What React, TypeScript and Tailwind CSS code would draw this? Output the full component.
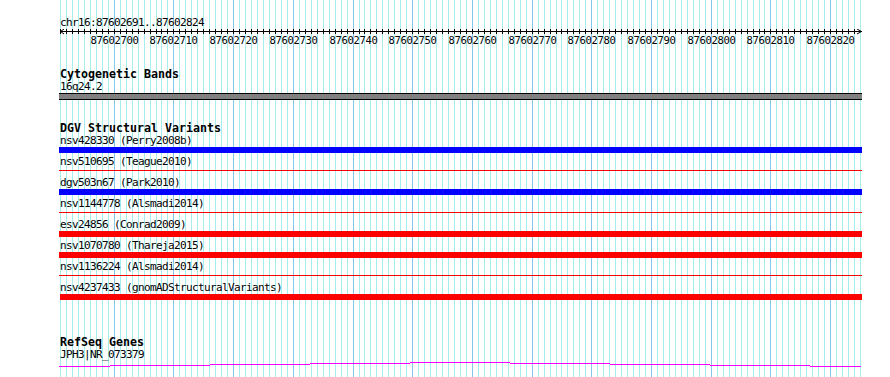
import React from "react";

const PX = 800 / 134;
const START = 87602691;
const col = (k: number) => Math.round(60 + k * PX);

function Grid() {
  const lines: React.ReactNode[] = [];
  for (let k = 0; k <= 134; k++) {
    const pos = START + k;
    const major = pos % 10 === 0;
    lines.push(
      <rect
        key={k}
        x={col(k)}
        y={0}
        width={1}
        height={377}
        fill={major ? "#84c6ec" : "#a6eeee"}
      />
    );
  }
  return (
    <svg
      className="absolute left-0 top-0"
      width={890}
      height={377}
      shapeRendering="crispEdges"
    >
      {lines}
    </svg>
  );
}

function Ruler() {
  const ticks: React.ReactNode[] = [];
  const labels: React.ReactNode[] = [];
  for (let k = 0; k <= 133; k++) {
    const pos = START + k;
    const x = col(k) - 59;
    ticks.push(<rect key={k} x={x} y={0} width={1} height={5} fill="#000" />);
    if (pos % 10 === 0) {
      labels.push(
        <text
          key={"l" + k}
          x={x + 0.5}
          y={15}
          textAnchor="middle"
          fontSize={10.5}
          letterSpacing={-0.3}
          fontFamily="'DejaVu Sans Mono', monospace"
          fill="#000"
        >
          {String(pos)}
        </text>
      );
    }
  }
  return (
    <svg width={803} height={17} className="block">
      <g shapeRendering="crispEdges">
        <rect x={1} y={2} width={802} height={1} fill="#000" />
        {ticks}
      </g>
      <path d="M5 0 L1.5 2.5 L5 5" stroke="#000" fill="none" strokeWidth={1} />
      <path d="M798 0 L802.5 2.5 L798 5" stroke="#000" fill="none" strokeWidth={1} />
      {labels}
    </svg>
  );
}

function Gene() {
  const starts = [59, 110, 210, 310, 410, 510, 610, 710, 810];
  const ys = [366, 365, 364, 363, 362, 363, 364, 365, 366];
  return (
    <svg width={803} height={17} className="block" shapeRendering="crispEdges">
      {starts.map((s, i) => {
        const e = i < starts.length - 1 ? starts[i + 1] : 861;
        return (
          <rect key={i} x={s - 59} y={ys[i] - 360} width={e - s} height={1} fill="#ff00ff" />
        );
      })}
    </svg>
  );
}

type Variant = { label: string; kind: "blue" | "red" | "thin"; inset?: boolean };

const variants: Variant[] = [
  { label: "nsv428330 (Perry2008b)", kind: "blue" },
  { label: "nsv510695 (Teague2010)", kind: "thin" },
  { label: "dgv503n67 (Park2010)", kind: "blue" },
  { label: "nsv1144778 (Alsmadi2014)", kind: "thin" },
  { label: "esv24856 (Conrad2009)", kind: "red" },
  { label: "nsv1070780 (Thareja2015)", kind: "red" },
  { label: "nsv1136224 (Alsmadi2014)", kind: "thin" },
  { label: "nsv4237433 (gnomADStructuralVariants)", kind: "red", inset: true },
];

const small =
  "h-[11px] leading-[11px] pl-px text-[11px] tracking-[-0.62px] whitespace-pre text-black font-['DejaVu_Sans_Mono',monospace]";
const bold =
  "h-[13px] leading-[13px] pl-px text-[11.63px] font-bold whitespace-pre text-black font-['DejaVu_Sans_Mono',monospace]";

export default function App() {
  return (
    <div className="relative w-[890px] h-[377px] overflow-hidden bg-white">
      <Grid />
      <div className="relative flex flex-col ml-[59px] w-[803px]">
        <div className="mt-[17px] h-[12px] leading-[11px] pl-px text-[11px] tracking-[-0.62px] whitespace-pre text-black font-['DejaVu_Sans_Mono',monospace]">
          chr16:87602691..87602824
        </div>
        <Ruler />
        <div className={"mt-[22px] " + bold}>Cytogenetic Bands</div>
        <div className={small}>16q24.2</div>
        <div className="mt-px h-[7px] border-y border-black bg-[#808080]" />
        <div className={"mt-[22px] " + bold}>DGV Structural Variants</div>
        {variants.map((v) => (
          <div key={v.label} className="flex flex-col h-[21px]">
            <div className={small}>{v.label}</div>
            <div className="mt-px h-[6px]">
              {v.kind === "blue" && <div className="h-[6px] bg-[#0000ff]" />}
              {v.kind === "red" && (
                <div className={"h-[6px] bg-[#ff0000] " + (v.inset ? "ml-px" : "")} />
              )}
              {v.kind === "thin" && (
                <div className="pt-[2px]">
                  <div className="h-px bg-[#ff0000]" />
                </div>
              )}
            </div>
          </div>
        ))}
        <div className={"mt-[33px] " + bold}>RefSeq Genes</div>
        <div className={small}>JPH3|NR_073379</div>
        <Gene />
      </div>
    </div>
  );
}
